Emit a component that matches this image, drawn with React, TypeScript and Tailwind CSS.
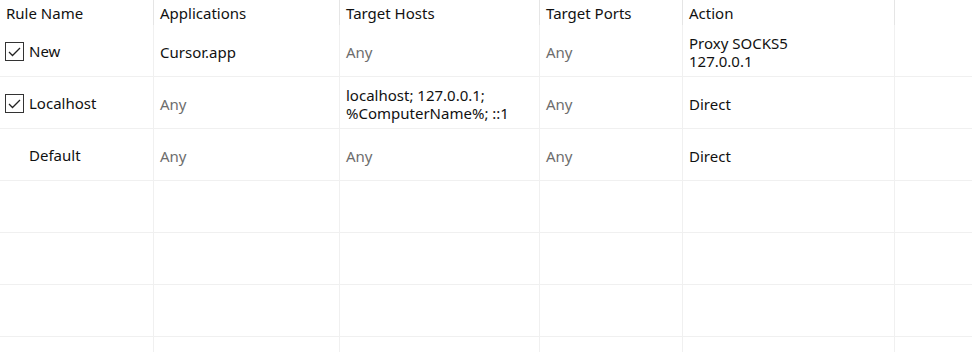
import React from 'react';

type Cell = { text: string[]; dim?: boolean };
type Rule = { name: string; checkbox: boolean; cells: Cell[] };

const columns = ['Rule Name', 'Applications', 'Target Hosts', 'Target Ports', 'Action'];
const widths = ['w-[154px]', 'w-[186px]', 'w-[200px]', 'w-[143px]', 'w-[212px]'];

const rules: Rule[] = [
  {
    name: 'New',
    checkbox: true,
    cells: [
      { text: ['Cursor.app'] },
      { text: ['Any'], dim: true },
      { text: ['Any'], dim: true },
      { text: ['Proxy SOCKS5', '127.0.0.1'] },
    ],
  },
  {
    name: 'Localhost',
    checkbox: true,
    cells: [
      { text: ['Any'], dim: true },
      { text: ['localhost; 127.0.0.1;', '%ComputerName%; ::1'] },
      { text: ['Any'], dim: true },
      { text: ['Direct'] },
    ],
  },
  {
    name: 'Default',
    checkbox: false,
    cells: [
      { text: ['Any'], dim: true },
      { text: ['Any'], dim: true },
      { text: ['Any'], dim: true },
      { text: ['Direct'] },
    ],
  },
];

function Checkbox() {
  return (
    <div className="w-[19px] h-[19px] border border-[#333] bg-white flex items-center justify-center shrink-0">
      <svg width="13" height="10" viewBox="0 0 13 10" fill="none">
        <path d="M1 5 L4.5 8.5 L12 1" stroke="#222" strokeWidth="1.3" />
      </svg>
    </div>
  );
}

export default function App() {
  const emptyRows = 4;
  return (
    <div
      className="w-[972px] h-[352px] bg-white overflow-hidden text-[15px] text-[#111]"
      style={{ fontFamily: '"Noto Sans", sans-serif' }}
    >
      {/* Header */}
      <div className="flex h-[25px]">
        {columns.map((c, i) => (
          <div key={c} className={`${widths[i]} h-full flex items-center pl-[6px] pt-[2px] border-r border-[#e5e5e5] shrink-0 leading-none`}>
            {c}
          </div>
        ))}
        <div className="flex-1" />
      </div>

      {/* Rows */}
      {rules.map((r) => (
        <div key={r.name} className="flex h-[52px] border-b border-[#f0f0f0]">
          <div className={`${widths[0]} h-full flex items-center gap-[5px] pl-[5px] pt-[2px] border-r border-[#f0f0f0] shrink-0`}>
            {r.checkbox ? <Checkbox /> : <div className="w-[19px] shrink-0" />}
            <span>{r.name}</span>
          </div>
          {r.cells.map((cell, i) => (
            <div
              key={i}
              className={`${widths[i + 1]} h-full flex flex-col justify-center pl-[6px] pt-[2px] border-r border-[#f0f0f0] shrink-0 leading-[18px] ${cell.dim ? 'text-[#6d6d6d]' : ''}`}
            >
              {cell.text.map((t) => (
                <div key={t}>{t}</div>
              ))}
            </div>
          ))}
          <div className="flex-1" />
        </div>
      ))}
      {Array.from({ length: emptyRows }).map((_, k) => (
        <div key={k} className="flex h-[52px] border-b border-[#f0f0f0]">
          {widths.map((w) => (
            <div key={w} className={`${w} h-full border-r border-[#f0f0f0] shrink-0`} />
          ))}
          <div className="flex-1" />
        </div>
      ))}
    </div>
  );
}
